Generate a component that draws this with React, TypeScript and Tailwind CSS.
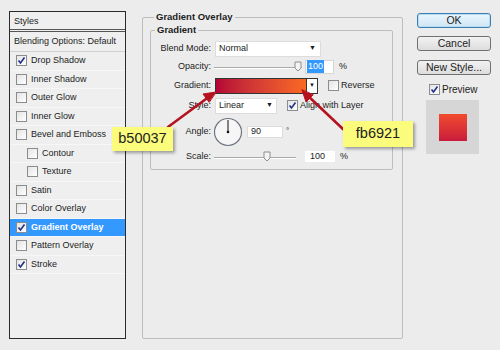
import React from "react";

const Check = ({ checked = false }: { checked?: boolean }) => (
  <span className="w-[11px] h-[11px] shrink-0 border border-[#8a8c8e] bg-gradient-to-br from-[#e4e4e4] to-white flex items-center justify-center">
    {checked && (
      <svg width="9" height="9" viewBox="0 0 9 9">
        <path d="M1.5 4.5 L3.5 7 L7.5 1.5" fill="none" stroke="#21318a" strokeWidth="1.6" />
      </svg>
    )}
  </span>
);

const styleRows = [
  { label: "Drop Shadow", checked: true },
  { label: "Inner Shadow" },
  { label: "Outer Glow" },
  { label: "Inner Glow" },
  { label: "Bevel and Emboss" },
  { label: "Contour", sub: true },
  { label: "Texture", sub: true },
  { label: "Satin" },
  { label: "Color Overlay" },
  { label: "Gradient Overlay", checked: true, active: true },
  { label: "Pattern Overlay" },
  { label: "Stroke", checked: true },
];

const Slider = ({ width, thumb }: { width: number; thumb: number }) => (
  <div className="relative h-full ml-[2px]" style={{ width }}>
    <div className="absolute left-0 right-0 top-1/2 h-[2px] border-t border-[#a9a9a9] border-b border-b-white" />
    <svg className="absolute top-[1px]" style={{ left: thumb }} width="8" height="11" viewBox="0 0 8 11">
      <path d="M1 1 H7 V7 L4 10 L1 7 Z" fill="#f4f4f4" stroke="#8d8d8d" />
    </svg>
  </div>
);

const Label = ({ children }: { children: React.ReactNode }) => (
  <div className="w-[61px] pr-[1px] text-right text-[#222]">{children}</div>
);

export default function App() {
  return (
    <div className="relative w-[500px] h-[350px] bg-[#ececec] font-['Liberation_Sans',Arial,sans-serif] text-[9px] text-[#1c1c1c] overflow-hidden">
      <div className="flex items-start pt-[11px] pl-[9px]">
        {/* Styles list */}
        <div className="w-[117px] h-[328px] border border-[#2b2b2b] bg-[#efefef] flex flex-col">
          <div className="h-[20px] flex items-center pl-[4px] pt-[2px] border-b-[3px] border-double border-[#555]">Styles</div>
          <div className="h-[20px] flex items-center pl-[4px] border-b border-[#d0d0d0]">Blending Options: Default</div>
          {styleRows.map((r) => (
            <div
              key={r.label}
              className={`h-[18.5px] flex items-center gap-[4px] border-b border-[#f7f7f7] ${r.sub ? "pl-[17px]" : "pl-[6px]"} ${r.active ? "bg-[#3399ff] text-white font-bold" : ""}`}
            >
              <Check checked={r.checked} />
              <span>{r.label}</span>
            </div>
          ))}
        </div>

        {/* Gradient Overlay settings */}
        <fieldset className="ml-[16px] -mt-[1px] w-[261px] h-[329px] border border-[#bdbdbd] rounded-[2px] pl-[7px] pr-[9px]">
          <legend className="ml-[4px] px-[2px] font-bold text-[9.5px]">Gradient Overlay</legend>
          <fieldset className="-mt-[1px] border border-[#bdbdbd] rounded-[2px] pb-[5px]">
            <legend className="ml-[4px] px-[2px] font-bold text-[9.5px]">Gradient</legend>
            <div className="flex flex-col pt-[3px]">
              <div className="h-[16px] flex items-center">
                <Label>Blend Mode:</Label>
                <div className="ml-[3px] w-[106px] h-full bg-white border border-[#dcdcdc] flex items-center justify-between pl-[3px] pr-[4px]">
                  <span>Normal</span>
                  <span className="text-[7px]">▼</span>
                </div>
              </div>
              <div className="mt-[3px] h-[14px] flex items-center">
                <Label>Opacity:</Label>
                <Slider width={88} thumb={80} />
                <div className="ml-[3px] w-[29px] h-full bg-white border border-[#d6d6d6] flex items-center pl-[1px]">
                  <span className="bg-[#3399ff] text-white px-[1px]">100</span>
                </div>
                <span className="ml-[5px]">%</span>
              </div>
              <div className="mt-[4px] h-[16px] flex items-center">
                <Label>Gradient:</Label>
                <div className="ml-[3px] w-[92px] h-full border border-[#333] bg-gradient-to-r from-[#b50037] to-[#fb6921]" />
                <div className="w-[11px] h-full border border-l-0 border-[#333] bg-white flex items-center justify-center text-[6px]">▼</div>
                <div className="ml-[10px] flex items-center gap-[2px]">
                  <Check />
                  <span>Reverse</span>
                </div>
              </div>
              <div className="mt-[4px] h-[16px] flex items-center">
                <Label>Style:</Label>
                <div className="ml-[3px] w-[62px] h-full bg-white border border-[#dcdcdc] flex items-center justify-between pl-[3px] pr-[3px]">
                  <span>Linear</span>
                  <span className="text-[7px]">▼</span>
                </div>
                <div className="ml-[10px] flex items-center gap-[2px]">
                  <Check checked />
                  <span>Align with Layer</span>
                </div>
              </div>
              <div className="mt-[3px] h-[30px] flex items-center">
                <Label>Angle:</Label>
                <svg className="ml-[1px]" width="30" height="30" viewBox="0 0 30 30">
                  <circle cx="15" cy="15" r="13.5" fill="#f6f6f6" stroke="#6d7480" strokeWidth="1.2" />
                  <line x1="15" y1="15" x2="15" y2="3" stroke="#111" strokeWidth="1" />
                  <circle cx="15" cy="15" r="1.3" fill="#111" />
                </svg>
                <div className="ml-[4px] w-[36px] h-[12px] bg-white border border-[#dcdcdc] flex items-center pl-[3px]">90</div>
                <span className="ml-[3px] self-start mt-[8px] text-[8px]">°</span>
              </div>
              <div className="mt-[3px] h-[14px] flex items-center">
                <Label>Scale:</Label>
                <Slider width={82} thumb={49} />
                <div className="ml-[9px] w-[30px] h-[11px] bg-white flex items-center pl-[5px]">100</div>
                <span className="ml-[5px]">%</span>
              </div>
            </div>
          </fieldset>
        </fieldset>

        {/* Buttons and preview */}
        <div className="ml-[14px] w-[74px] flex flex-col text-[10.5px]">
          <button className="mt-[2px] h-[15px] rounded-[3px] border border-[#3c7fb1] bg-gradient-to-b from-[#eaf6fd] to-[#cfe6f5] shadow-[inset_0_0_0_1px_#b8dcf3] leading-none">OK</button>
          <button className="mt-[8px] h-[15px] rounded-[3px] border border-[#707070] bg-gradient-to-b from-[#f2f2f2] to-[#dddddd] leading-none">Cancel</button>
          <button className="mt-[9px] h-[15px] rounded-[3px] border border-[#707070] bg-gradient-to-b from-[#f2f2f2] to-[#dddddd] leading-none">New Style...</button>
          <div className="mt-[8px] h-[12px] ml-[12px] flex items-center gap-[2px] text-[10px]">
            <Check checked />
            <span>Preview</span>
          </div>
          <div className="mt-[5px] ml-[9px] w-[53px] h-[54px] bg-[#d6d6d6] flex items-center justify-center">
            <div className="w-[28px] h-[27px] bg-gradient-to-b from-[#f24a2c] to-[#c91a3b]" />
          </div>
        </div>
      </div>

      {/* Annotation arrows */}
      <svg className="absolute left-0 top-0 pointer-events-none" width="500" height="350">
        <g stroke="#b5121f" strokeWidth="2.6" fill="#b5121f" strokeLinecap="round">
          <line x1="168" y1="127" x2="210" y2="96" />
          <path d="M216 92 L203 94 L209 102 Z" strokeWidth="1" />
          <line x1="344" y1="130" x2="307" y2="95" />
          <path d="M302 90 L306 102 L313 95 Z" strokeWidth="1" />
        </g>
      </svg>

      {/* Callouts */}
      <div className="absolute left-[112px] top-[127px] w-[61px] h-[24px] bg-[#fbfb7c] shadow-[2px_2px_3px_rgba(0,0,0,0.35)] flex items-center justify-center text-[14.5px] text-[#222]">
        b50037
      </div>
      <div className="absolute left-[343px] top-[121px] w-[70px] h-[26px] bg-[#fbfb7c] shadow-[2px_2px_3px_rgba(0,0,0,0.35)] flex items-center justify-center text-[14.5px] text-[#222]">
        fb6921
      </div>
    </div>
  );
}
